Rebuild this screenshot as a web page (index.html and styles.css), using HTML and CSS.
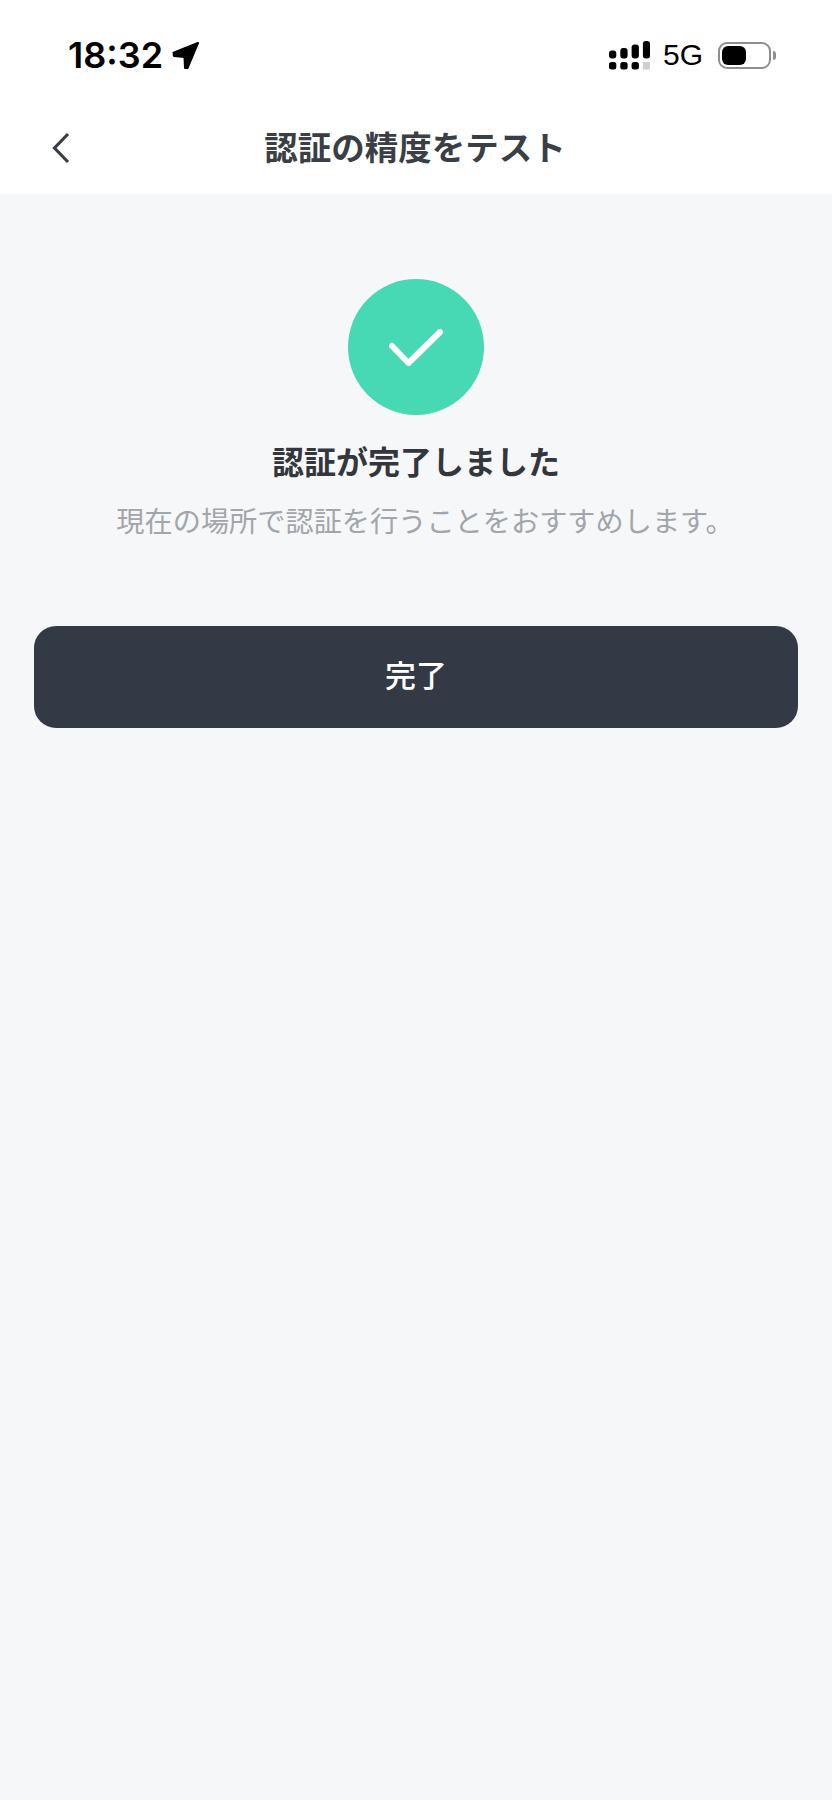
FILE: index.html
```html
<!DOCTYPE html>
<html lang="ja">
<head>
    <meta charset="UTF-8">
    <meta name="viewport" content="width=device-width, initial-scale=1.0">
    <title>認証の精度をテスト</title>
    <link rel="stylesheet" href="styles.css">
</head>
<body>
    <div class="top-area">
        <div class="status-bar">
            <div class="status-left">
                <span class="time">18:32</span>
                <svg class="location" width="29" height="29" viewBox="0 0 29 29">
                    <path d="M27 2 2.500 11.800 3 15 13.500 16 14 27 16.500 27z" fill="#000" stroke="#000" stroke-width="2" stroke-linejoin="round"/>
                </svg>
            </div>
            <div class="status-right">
                <svg class="signal" width="41" height="29" viewBox="0 0 41 29">
                    <rect x="0" y="9.500" width="7.300" height="8" rx="3"/>
                    <rect x="0" y="21" width="7.300" height="7.500" rx="2.500"/>
                    <rect x="11.300" y="7" width="7.300" height="10.500" rx="3"/>
                    <rect x="11.300" y="21" width="7.300" height="7.500" rx="2.500"/>
                    <rect x="22.600" y="3.500" width="7.300" height="14" rx="3"/>
                    <rect x="22.600" y="21" width="7.300" height="7.500" rx="2.500"/>
                    <rect x="33.900" y="0" width="7.100" height="17.500" rx="3"/>
                    <rect x="33.900" y="21" width="7.100" height="7.500" fill="#cfcfcf"/>
                </svg>
                <span class="network">5G</span>
                <div class="battery">
                    <div class="battery-body"><div class="battery-level"></div></div>
                    <div class="battery-nub"></div>
                </div>
            </div>
        </div>
        <div class="nav-bar">
            <svg class="back" width="18" height="32" viewBox="0 0 18 32">
                <path d="M16 2 2.500 16 16 30" fill="none" stroke="#3b4047" stroke-width="3.200"/>
            </svg>
            <h1 class="nav-title">認証の精度をテスト</h1>
        </div>
    </div>

    <div class="content">
        <div class="result-icon">
            <svg class="check" width="56" height="40" viewBox="0 0 56 40">
                <path d="M4 17 20.500 34 52 3" fill="none" stroke="#fff" stroke-width="6" stroke-linecap="round" stroke-linejoin="round"/>
            </svg>
        </div>
        <h2 class="result-title">認証が完了しました</h2>
        <p class="result-desc">現在の場所で認証を行うことをおすすめします。</p>
        <button class="done-btn" type="button">完了</button>
    </div>
</body>
</html>
```

FILE: styles.css
```css
*{
    margin: 0;
    padding: 0;
    box-sizing: border-box;
}
html,body{
    height: 100%;
}
body{
    background-color: #f6f7f8;
    font-family: "Noto Sans CJK JP", "Noto Sans", sans-serif;
}
.top-area{
    height: 194px;
    background-color: #fff;
}
.status-bar{
    height: 94px;
    padding: 40px 56px 0 68px;
    display: flex;
    justify-content: space-between;
    align-items: flex-start;
}
.status-left{
    display: flex;
    align-items: center;
}
.time{
    font-family: Inter, sans-serif;
    font-size: 36px;
    font-weight: 600;
    line-height: 30px;
    color: #000;
}
.location{
    margin-left: 8px;
}
.status-right{
    display: flex;
    align-items: center;
}
.signal{
    fill: #000;
}
.network{
    margin-left: 13px;
    font-family: "Liberation Sans", sans-serif;
    font-size: 30px;
    line-height: 30px;
    color: #000;
}
.battery{
    margin-left: 15px;
    display: flex;
    align-items: center;
}
.battery-body{
    width: 53px;
    height: 27px;
    padding: 2px;
    border: 2px solid #8e8e8e;
    border-radius: 9px;
}
.battery-level{
    width: 24px;
    height: 19px;
    background-color: #000;
    border-radius: 6px;
}
.battery-nub{
    width: 3px;
    height: 9px;
    margin-left: 2px;
    background-color: #8e8e8e;
    border-radius: 0 3px 3px 0;
}
.nav-bar{
    height: 100px;
    padding: 3px 0 0 52px;
    position: relative;
    display: flex;
    align-items: center;
}
.back{
    margin-top: 4px;
}
.nav-title{
    position: absolute;
    left: 0;
    right: 2px;
    text-align: center;
    font-size: 33.500px;
    font-weight: 700;
    line-height: 50px;
    color: #3a3e45;
}
.content{
    padding: 85px 34px 0 34px;
    display: flex;
    flex-direction: column;
    align-items: center;
}
.result-icon{
    width: 136px;
    height: 136px;
    border-radius: 50%;
    background-color: #46d9b3;
    display: flex;
    justify-content: center;
    align-items: center;
}
.check{
    margin-top: 3px;
}
.result-title{
    margin-top: 22px;
    font-size: 32px;
    font-weight: 700;
    line-height: 46px;
    color: #33373d;
}
.result-desc{
    margin-top: 17px;
    padding-left: 18px;
    font-size: 28.200px;
    font-weight: 400;
    line-height: 40px;
    color: #a2a5a9;
    white-space: nowrap;
}
.done-btn{
    width: 100%;
    height: 102px;
    margin-top: 86px;
    padding-bottom: 7px;
    border: none;
    border-radius: 22px;
    background-color: #343a45;
    color: #fff;
    font-family: inherit;
    font-size: 31px;
    font-weight: 500;
}
```
